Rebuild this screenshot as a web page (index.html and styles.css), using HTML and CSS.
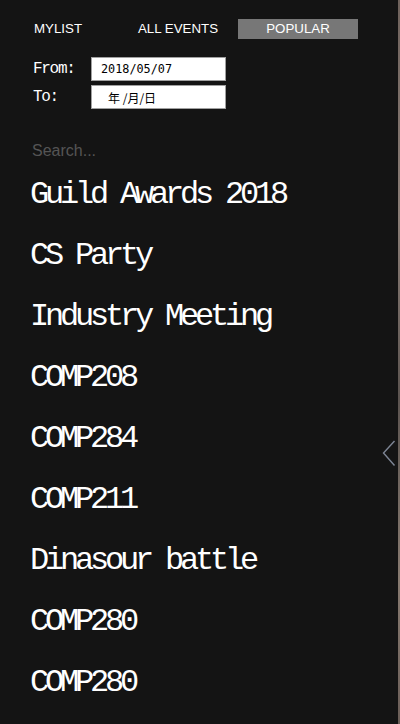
FILE: index.html
```html
<!DOCTYPE html>
<html>
<head>
<meta charset="utf-8">
<link rel="stylesheet" href="styles.css">
</head>
<body>
<div class="sidebar">
  <nav class="tabs">
    <div class="tab">MYLIST</div>
    <div class="tab">ALL EVENTS</div>
    <div class="tab active">POPULAR</div>
  </nav>
  <div class="dates">
    <div class="date-row">
      <span class="date-label">From:</span>
      <div class="date-input"><span class="date-value">2018/05/07</span></div>
    </div>
    <div class="date-row">
      <span class="date-label">To:</span>
      <div class="date-input"><span class="date-empty">年 /月/日</span></div>
    </div>
  </div>
  <div class="search">Search...</div>
  <ul class="events">
    <li>Guild Awards 2018</li>
    <li>CS Party</li>
    <li>Industry Meeting</li>
    <li>COMP208</li>
    <li>COMP284</li>
    <li>COMP211</li>
    <li>Dinasour battle</li>
    <li>COMP280</li>
    <li>COMP280</li>
  </ul>
  <svg class="chevron" width="14" height="27" viewBox="0 0 14 27">
    <polyline points="12.5,1 1.5,13 12.5,25.5" fill="none" stroke="#7d8594" stroke-width="1.4"/>
  </svg>
</div>
</body>
</html>
```
FILE: styles.css
```css
html, body {
  margin: 0;
  padding: 0;
}
body {
  width: 400px;
  height: 724px;
  overflow: hidden;
  background: linear-gradient(180deg, #6f625c 0%, #8a7d76 30%, #5c5450 55%, #877a70 80%, #6b5e58 100%);
}
.sidebar {
  position: relative;
  width: 398px;
  height: 724px;
  background: #141414;
  overflow: hidden;
}
.tabs {
  display: flex;
  padding-top: 19px;
  margin-left: -2px;
}
.tab {
  width: 120px;
  height: 20px;
  line-height: 20px;
  text-align: center;
  color: #fff;
  font-family: "Liberation Sans", Arial, sans-serif;
  font-size: 13.3px;
}
.tab.active {
  background: #777;
}
.dates {
  display: flex;
  flex-direction: column;
  gap: 4px;
  margin-top: 18px;
  padding-left: 33px;
}
.date-row {
  display: flex;
  align-items: center;
  height: 24px;
}
.date-label {
  width: 58px;
  color: #fff;
  font-family: "Liberation Mono", monospace;
  font-size: 16px;
  letter-spacing: -1.3px;
}
.date-input {
  box-sizing: border-box;
  width: 135px;
  height: 24px;
  background: #fff;
  border: 1px solid #a0a0a0;
  display: flex;
  align-items: center;
  padding-left: 9px;
  color: #000;
}
.date-value {
  font-family: "DejaVu Sans Mono", monospace;
  font-size: 11.8px;
}
.date-empty {
  padding-left: 7px;
  font-family: "Noto Sans CJK SC", sans-serif;
  font-size: 12px;
  white-space: pre;
}
.search {
  margin-top: 30px;
  height: 24px;
  line-height: 24px;
  padding-left: 32px;
  color: #555;
  font-family: "Liberation Sans", Arial, sans-serif;
  font-size: 16px;
}
.events {
  list-style: none;
  margin: 1px 0 0 0;
  padding: 0 0 0 30px;
}
.events li {
  height: 61px;
  line-height: 61px;
  color: #fff;
  font-family: "Liberation Mono", monospace;
  font-size: 32px;
  letter-spacing: -4.2px;
  white-space: nowrap;
}
.chevron {
  position: absolute;
  left: 382px;
  top: 440px;
}
```
